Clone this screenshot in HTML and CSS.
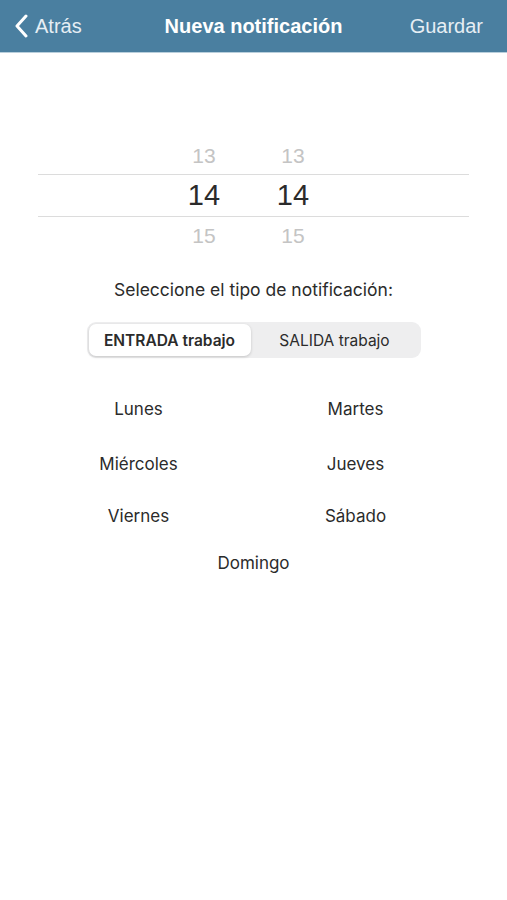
FILE: index.html
```html
<!DOCTYPE html>
<html>
<head>
    <meta charset="utf-8">
    <title>Nueva notificación</title>
    <link rel="stylesheet" href="styles.css">
</head>
<body>
    <div class="navbar">
        <div class="nav-back">
            <svg class="chevron" width="14" height="24" viewBox="0 0 14 24">
                <path d="M12 2 L3 12 L12 22" fill="none" stroke="#ffffff" stroke-width="3" stroke-linecap="round" stroke-linejoin="round"/>
            </svg>
            <span>Atrás</span>
        </div>
        <div class="nav-title">Nueva notificación</div>
        <div class="nav-save">Guardar</div>
    </div>

    <div class="picker">
        <div class="picker-row faded">
            <span class="picker-cell">13</span>
            <span class="picker-cell">13</span>
        </div>
        <div class="picker-row selected">
            <span class="picker-cell">14</span>
            <span class="picker-cell">14</span>
        </div>
        <div class="picker-row faded">
            <span class="picker-cell">15</span>
            <span class="picker-cell">15</span>
        </div>
    </div>

    <div class="type-label">Seleccione el tipo de notificación:</div>

    <div class="segmented">
        <div class="segment active">ENTRADA trabajo</div>
        <div class="segment">SALIDA trabajo</div>
    </div>

    <div class="days">
        <div class="day">Lunes</div>
        <div class="day">Martes</div>
        <div class="day">Miércoles</div>
        <div class="day">Jueves</div>
        <div class="day">Viernes</div>
        <div class="day">Sábado</div>
        <div class="day full">Domingo</div>
    </div>
</body>
</html>
```

FILE: styles.css
```css
body {
	margin: 0;
	background: #ffffff;
	font-family: "Liberation Sans", Arial, sans-serif;
	color: #2b2b2b;
}

.navbar {
	height: 52px;
	background: #4a7fa0;
	border-bottom: 1px solid #b9cfdc;
	display: flex;
	align-items: center;
	justify-content: space-between;
	padding: 0 24px 0 14px;
	position: relative;
	color: #ffffff;
	font-size: 20px;
}
.nav-back {
	display: flex;
	align-items: center;
	gap: 7px;
	color: #e6eef4;
}
.chevron {
	display: block;
}
.nav-title {
	position: absolute;
	left: 0;
	right: 0;
	text-align: center;
	font-weight: bold;
	pointer-events: none;
}
.nav-save {
	color: #e6eef4;
}

.picker {
	margin: 83px 38px 0 38px;
}
.picker-row {
	display: flex;
	justify-content: center;
	gap: 29px;
	padding-right: 10px;
	align-items: center;
}
.picker-cell {
	width: 60px;
	text-align: center;
}
.picker-row.faded {
	height: 38px;
	font-size: 21px;
	color: #c4c4c4;
}
.picker-row.faded:first-child {
	padding-top: 2px;
	height: 36px;
}
.picker-row.selected {
	height: 41px;
	font-size: 29px;
	color: #2b2b2b;
	border-top: 1px solid #dcdcdc;
	border-bottom: 1px solid #dcdcdc;
}

.type-label,
.segment,
.days {
	font-family: Inter, "Liberation Sans", sans-serif;
}

.type-label {
	margin-top: 24px;
	text-align: center;
	font-size: 17.5px;
	color: #2b2b2b;
}

.segmented {
	margin: 22px auto 0 auto;
	width: 330px;
	height: 32px;
	padding: 2px;
	background: #eeeeef;
	border-radius: 9px;
	display: flex;
}
.segment {
	flex: 1;
	display: flex;
	align-items: center;
	justify-content: center;
	font-size: 15.5px;
	color: #2b2b2b;
	border-radius: 7px;
}
.segment.active {
	background: #ffffff;
	font-weight: 600;
	box-shadow: 0 1px 3px rgba(0,0,0,0.18);
	flex: 0 0 162px;
}

.days {
	margin: 41px 43px 0 30px;
	display: grid;
	grid-template-columns: 1fr 1fr;
	grid-template-rows: 55px 52px 47px 30px;
	font-size: 17px;
	color: #2b2b2b;
}
.day {
	text-align: center;
}
.day.full {
	grid-column: 1 / 3;
	padding-left: 13px;
}
```
